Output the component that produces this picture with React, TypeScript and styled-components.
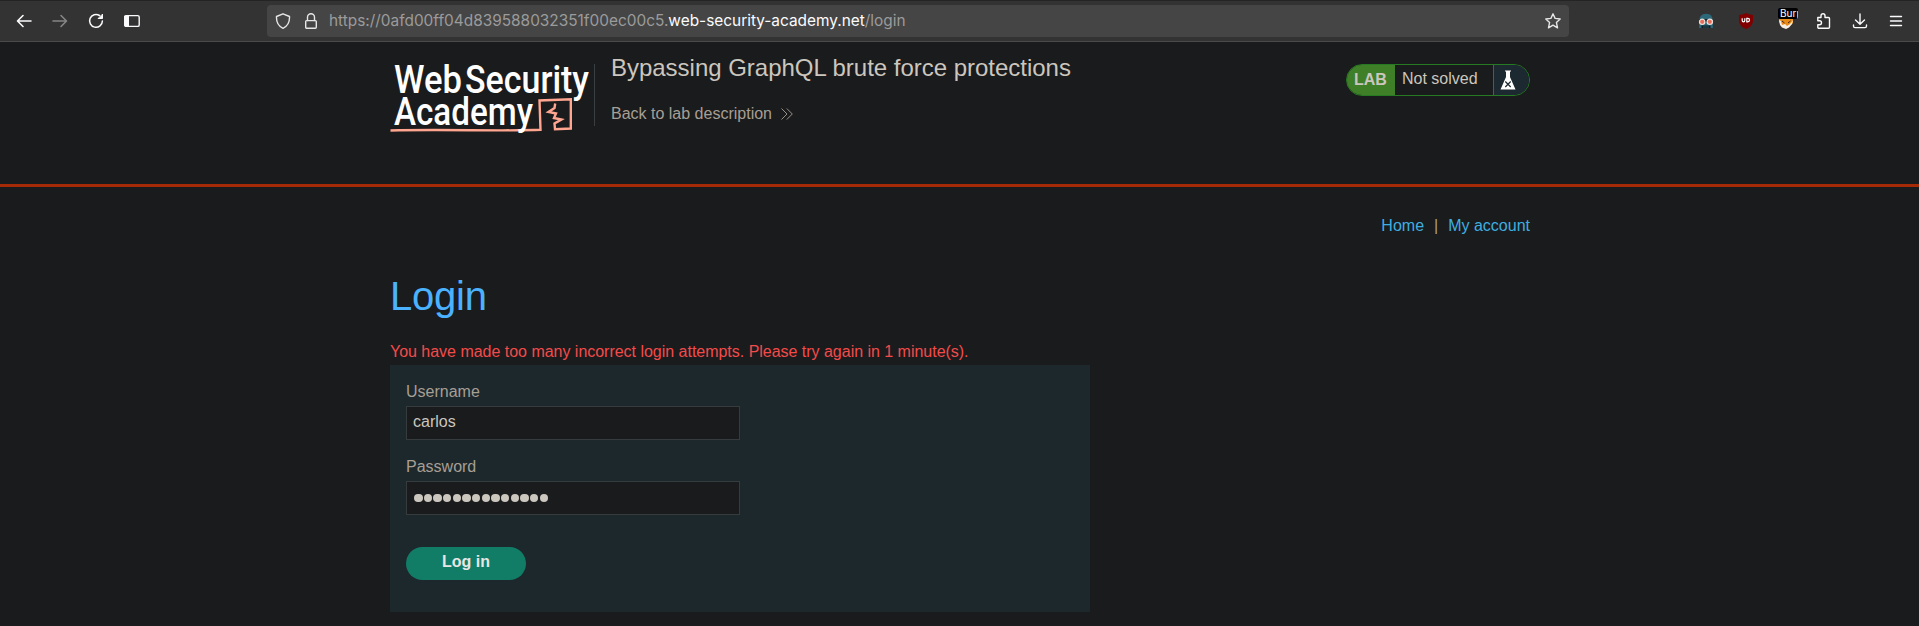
import React from "react";
import styled, { createGlobalStyle } from "styled-components";

const GlobalStyle = createGlobalStyle`
  *, *::before, *::after { box-sizing: border-box; }
  html, body { margin: 0; background: #1a1b1c; }
  body { font-family: "Liberation Sans", Arial, sans-serif; font-size: 16px; color: #a79f94; overflow: hidden; }
`;

const Page = styled.div`
  height: 626px;
  display: flex;
  flex-direction: column;
  overflow: hidden;
`;

const Toolbar = styled.div`
  height: 42px;
  flex: none;
  display: flex;
  align-items: center;
  background: #333333;
  border-top: 1px solid #242424;
  border-bottom: 1px solid #4a4a4a;
  padding: 0 11px 0 12px;
`;

const NavButtons = styled.div`
  display: flex;
  gap: 12px;
  width: 255px;
`;

const IconBox = styled.span<{ $dim?: boolean }>`
  width: 24px;
  height: 24px;
  display: flex;
  align-items: center;
  justify-content: center;
  color: ${(p) => (p.$dim ? "#858585" : "#fbfbfe")};
`;

const AddressBar = styled.div`
  width: 1302px;
  height: 32px;
  border-radius: 4px;
  background: #454545;
  display: flex;
  align-items: center;
  padding: 0 8px 0 8px;
`;

const AddressIcon = styled.span<{ $gap: number }>`
  display: flex;
  color: #e6e6e6;
  margin-right: ${(p) => p.$gap}px;
`;

const Url = styled.div`
  flex: 1;
  font-family: Inter, "Noto Sans", sans-serif;
  font-size: 15.4px;
  line-height: 20px;
  color: #9b9b9b;
  white-space: nowrap;
  b { font-weight: 400; color: #fbfbfe; }
`;

const Extensions = styled.div`
  display: flex;
  margin-left: auto;
  gap: 16px;
  align-items: center;
`;

const Actions = styled.div`
  display: flex;
  gap: 12px;
  margin-left: -2px;
`;

const BurpBox = styled(IconBox)`
  position: relative;
`;

const BurpBadge = styled.span`
  position: absolute;
  left: 4px;
  top: -1px;
  width: 20px;
  height: 11px;
  border-radius: 2px;
  overflow: hidden;
  padding-left: 2px;
  background: #000;
  color: #fff;
  font: 10px/10px Inter, sans-serif;
`;

const Header = styled.header`
  height: 145px;
  flex: none;
  border-bottom: 3px solid #a52a05;
`;

const Container = styled.div`
  width: 1140px;
  margin: 0 auto 0 390px;
`;

const HeaderRow = styled(Container)`
  display: flex;
  padding-top: 22px;
`;

const LogoCell = styled.div`
  width: 205px;
  height: 62px;
  border-right: 1px solid #3a3e40;
  svg { display: block; overflow: visible; }
`;

const TitleCell = styled.div`
  flex: 1;
  padding-left: 16px;
  margin-top: -12px;
`;

const Title = styled.h2`
  margin: 0;
  font-size: 24px;
  line-height: 31px;
  font-weight: 400;
  letter-spacing: -0.02px;
  color: #cbc6be;
`;

const BackLink = styled.a`
  display: flex;
  align-items: center;
  gap: 9px;
  margin-top: 19px;
  line-height: 24px;
`;

const Status = styled.div`
  display: flex;
  width: 184px;
  height: 32px;
  border: 1px solid #267a22;
  border-radius: 16px;
  overflow: hidden;
`;

const LabTag = styled.span`
  width: 48px;
  padding-left: 7px;
  background: #3e7f28;
  color: #cbc6be;
  font-weight: 700;
  line-height: 30px;
`;

const StatusText = styled.span`
  flex: 1;
  padding-left: 7px;
  line-height: 28px;
  color: #cbc6be;
`;

const Flask = styled.span`
  width: 36px;
  border-left: 1px solid #267a22;
  background: #1c2930;
  padding: 5px 0 0 6px;
`;

const TopLinks = styled.nav`
  display: flex;
  justify-content: flex-end;
  gap: 10px;
  padding-top: 27px;
  line-height: 24px;
  a { color: #3eaee0; }
`;

const Heading = styled.h1`
  margin: 33px 0 0;
  font-size: 40px;
  line-height: 50px;
  font-weight: 400;
  letter-spacing: -0.25px;
  color: #4bb2ff;
`;

const Warning = styled.p`
  margin: 18px 0 0;
  line-height: 26px;
  letter-spacing: -0.02px;
  color: #f34b4b;
`;

const Panel = styled.form`
  width: 700px;
  height: 247px;
  background: #1d282c;
  padding: 14px 16px;
`;

const Label = styled.label`
  display: block;
  height: 27px;
  line-height: 26px;
`;

const Field = styled.div`
  width: 334px;
  height: 34px;
  margin-bottom: 14px;
  border: 1px solid #363b3d;
  background: #1a1b1c;
  color: #cbc6be;
  padding-left: 6px;
  line-height: 30px;
  display: flex;
`;

const Dots = styled.span`
  display: flex;
  gap: 1.16px;
  padding-left: 1px;
  align-items: center;
`;

const Dot = styled.i`
  width: 8.5px;
  height: 8.5px;
  border-radius: 50%;
  background: #cbc6be;
`;

const Submit = styled.button`
  display: block;
  margin-top: 32px;
  width: 120px;
  height: 33px;
  border: 0;
  border-radius: 17px;
  background: #117d67;
  color: #e8e6e3;
  font: 700 16px/28px "Liberation Sans", Arial, sans-serif;
  padding: 0 0 4px;
`;

const stroke = { fill: "none", stroke: "currentColor", strokeWidth: 1.4, strokeLinecap: "round", strokeLinejoin: "round" } as const;

const Logo = () => (
  <svg width="204" height="70" viewBox="0 0 204 70" fontFamily="Roboto, sans-serif" fontWeight="500" fill="#fff">
    <text x="4" y="28.5" fontSize="38" textLength="68" lengthAdjust="spacingAndGlyphs">Web</text>
    <text x="75" y="28.5" fontSize="38" textLength="124" lengthAdjust="spacingAndGlyphs">Security</text>
    <path d="M.5 66.500Q25 65.800 80 66.200T150.500 65.800L149.500 36.500 180.800 35.300 180.800 64.500 165 65.300 164.500 59.500 171.500 55.500 164 54 166 49.500 158.500 48 164.500 44 165.200 39.500" fill="none" stroke="#ffa590" strokeWidth="2.400" />
    <text x="4" y="61" fontSize="38" textLength="139" lengthAdjust="spacingAndGlyphs">Academy</text>
  </svg>
);

export default function App() {
  return (
    <Page>
      <GlobalStyle />
      <Toolbar>
        <NavButtons>
          <IconBox><svg width="16" height="16" viewBox="0 0 16 16" {...stroke} strokeWidth={1.6}><path d="M15 8H2M7 2.500 1.500 8 7 13.500" /></svg></IconBox>
          <IconBox $dim><svg width="16" height="16" viewBox="0 0 16 16" {...stroke} strokeWidth={1.6}><path d="M1 8H14M9 2.500 14.500 8 9 13.500" /></svg></IconBox>
          <IconBox><svg width="16" height="16" viewBox="0 0 16 16" {...stroke} strokeWidth={1.5}><path d="M11.500 2.500A6.400 6.400 0 1 0 14.400 8" /><path d="M14.500 1.500V5.500H10.500Z" fill="currentColor" strokeWidth={1} /></svg></IconBox>
          <IconBox><svg width="16" height="16" viewBox="0 0 16 16" {...stroke}><rect x=".8" y="2.600" width="14.400" height="10.800" rx="1.500" /><path d="M1 3H4.500V13H1Z" fill="currentColor" strokeWidth={1} /></svg></IconBox>
        </NavButtons>
        <AddressBar>
          <AddressIcon $gap={12}><svg width="16" height="16" viewBox="0 0 16 16" {...stroke}><path d="M8 .8 14.500 3.500C14.800 9 12 13.500 8 15.300 4 13.500 1.200 9 1.500 3.500Z" /></svg></AddressIcon>
          <AddressIcon $gap={10}><svg width="16" height="16" viewBox="0 0 16 16" {...stroke}><rect x="2.700" y="7.600" width="10.600" height="7.600" rx="1" /><path d="M4.500 7.500V4.300a3.500 3.500 0 0 1 7 0V7.500" /></svg></AddressIcon>
          <Url>https://0afd00ff04d839588032351f00ec00c5.<b>web-security-academy.net</b>/login</Url>
          <AddressIcon $gap={0}><svg width="16" height="16" viewBox="0 0 16 16" {...stroke}><path d="M8 .8 10.100 5.400 15.200 6 11.400 9.400 12.500 14.800 8 12.100 3.500 14.800 4.600 9.400 .8 6 5.900 5.400Z" /></svg></AddressIcon>
        </AddressBar>
        <Extensions>
          <IconBox><svg width="16" height="16" viewBox="0 0 16 16"><path d="M1.500 8Q1 1 8 .8T14.500 8L15 15H1Z" fill="#2b6879" /><path d="M1 6H15V9H1Z" fill="#14232a" /><circle cx="4.200" cy="8.800" r="2.700" fill="#e8705a" stroke="#e8e0dc" strokeWidth="1.200" /><circle cx="11.800" cy="8.800" r="2.700" fill="#e8705a" stroke="#e8e0dc" strokeWidth="1.200" /><path d="M3.500 12.500H12.500V15H3.500Z" fill="#101f26" /><path d="M6 13V15M8 13V15M10 13V15" stroke="#2b6879" strokeWidth=".7" /></svg></IconBox>
          <IconBox><svg width="16" height="16" viewBox="0 0 16 16"><path d="M8 0Q10 1.700 15 2V8Q15 13 8 16 1 13 1 8V2Q6 1.700 8 0Z" fill="#800000" /><path d="M4.200 5.300V7.600a1.300 1.300 0 0 0 2.600 0V5.300M8.800 5.300V8.800H9.800a1.750 1.750 0 0 0 0-3.500Z" fill="none" stroke="#fff" strokeWidth="1.200" /></svg></IconBox>
          <BurpBox><svg width="16" height="16" viewBox="0 0 16 16"><path d="M1 2H15V10L11 14 8 15.500 4 13.500 1 9Z" fill="#e98b18" /><path d="M1 7 3 8 4 12 7 11 9 13 12 11 15 7 14 11 11 14.500 8 16 4 14.500 2 12Z" fill="#f5eee4" /><path d="M4 8 6.500 10M12.500 8 10 10" stroke="#41240b" /></svg><BurpBadge>Burp</BurpBadge></BurpBox>
          <Actions>
            <IconBox><svg width="16" height="16" viewBox="0 0 16 16" {...stroke}><path d="M1.800 4.500H5V2.700a2 2 0 0 1 4 0V4.500H12.500a1 1 0 0 1 1 1V14.200a1 1 0 0 1-1 1H2.800a1 1 0 0 1-1-1V11.800H3.500a2 2 0 0 0 0-4H1.800Z" /></svg></IconBox>
            <IconBox><svg width="16" height="16" viewBox="0 0 16 16" {...stroke}><path d="M8 1V11M3.500 7 8 11.300 12.500 7M1.500 12V13Q1.500 14.600 3 14.600H13Q14.500 14.600 14.500 13V12" /></svg></IconBox>
            <IconBox><svg width="16" height="16" viewBox="0 0 16 16" {...stroke}><path d="M2.500 3.500H13.500M2.500 8H13.500M2.500 12.500H13.500" /></svg></IconBox>
          </Actions>
        </Extensions>
      </Toolbar>
      <Header>
        <HeaderRow>
          <LogoCell><Logo /></LogoCell>
          <TitleCell>
            <Title>Bypassing GraphQL brute force protections</Title>
            <BackLink>Back to lab description<svg width="12" height="12" viewBox="0 0 12 12" fill="none" stroke="#a79f94" strokeWidth=".9"><path d="M.5 .5 6 6 .5 11.500M5.800 .5 11.300 6 5.800 11.500" /></svg></BackLink>
          </TitleCell>
          <Status>
            <LabTag>LAB</LabTag>
            <StatusText>Not solved</StatusText>
            <Flask><svg width="16" height="20" viewBox="0 0 16 20"><path d="M5 .5H11V1.500H10V7L15.500 19.500H.5L6 7V1.500H5Z" fill="#fff" /><path d="M5.300 11.500 10.700 17M10.700 11.500 5.300 17" stroke="#1c2930" strokeWidth="1.200" /></svg></Flask>
          </Status>
        </HeaderRow>
      </Header>
      <Container>
        <TopLinks><a>Home</a><span>|</span><a>My account</a></TopLinks>
        <Heading>Login</Heading>
        <Warning>You have made too many incorrect login attempts. Please try again in 1 minute(s).</Warning>
        <Panel>
          <Label>Username</Label>
          <Field>carlos</Field>
          <Label>Password</Label>
          <Field><Dots>{Array.from({ length: 14 }, (_, i) => <Dot key={i} />)}</Dots></Field>
          <Submit type="button">Log in</Submit>
        </Panel>
      </Container>
    </Page>
  );
}
